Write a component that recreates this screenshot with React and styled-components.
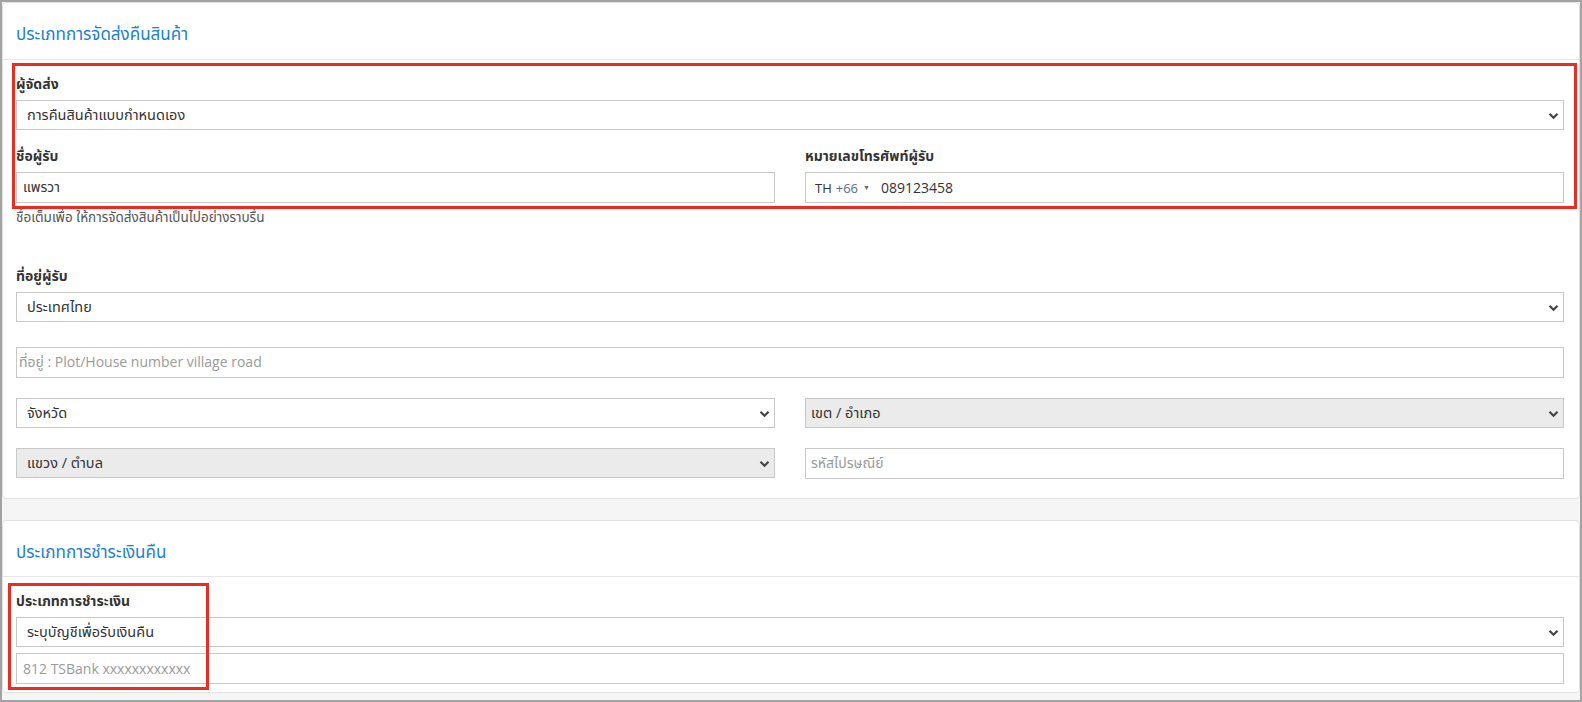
import React from 'react'
import styled, { createGlobalStyle } from 'styled-components'

const GlobalStyle = createGlobalStyle`
    body {
        margin: 0;
        font-family: 'Open Sans', 'Noto Sans Thai', 'Noto Sans', sans-serif;
        color: #333;
    }
`

const Frame = styled.div`
    position: relative;
    width: 1582px;
    height: 702px;
    box-sizing: border-box;
    border: 2px solid #a3a3a3;
    background: #f5f5f5;
    display: flex;
    flex-direction: column;
    gap: 21px;
    overflow: hidden;
`

const Card = styled.div`
    background: #fff;
    border: 1px solid #e1e1e1;
    border-radius: 4px;
`

const CardHeader = styled.div`
    height: ${p => p.height || 56}px;
    box-sizing: border-box;
    border-bottom: 1px solid #e6e6e6;
    padding: 8px 13px 0;
    display: flex;
    align-items: center;
`

const Title = styled.h3`
    margin: 0;
    font-size: 17px;
    font-weight: 400;
    color: #1a7fd2;
`

const CardBody = styled.div`
    padding: ${p => p.top || 15}px 15px ${p => p.bottom || 19}px 13px;
    display: flex;
    flex-direction: column;
`

const Label = styled.div`
    font-size: 14px;
    font-weight: 700;
    line-height: 18px;
    margin-top: ${p => p.gap || 0}px;
    margin-bottom: 7px;
    color: #333;
`

const Row = styled.div`
    display: grid;
    grid-template-columns: 1fr 1fr;
    column-gap: 30px;
    margin-top: ${p => p.gap || 0}px;
`

const Field = styled.div`
    display: flex;
    flex-direction: column;
`

const SelectBox = styled.div`
    height: 30px;
    box-sizing: border-box;
    border: 1px solid #c8c8c8;
    background: ${p => (p.disabled ? '#ebebeb' : '#fff')};
    padding: 1px 4px 0 ${p => p.pad || 10}px;
    margin-top: ${p => p.gap || 0}px;
    display: flex;
    align-items: center;
    justify-content: space-between;
    font-size: 14.5px;
    color: #333;
`

const InputBox = styled.div`
    height: 31px;
    box-sizing: border-box;
    border: 1px solid #c8c8c8;
    background: #fff;
    padding: 0 ${p => p.pad || 6}px;
    margin-top: ${p => p.gap || 0}px;
    display: flex;
    align-items: center;
    font-size: 14px;
    color: ${p => (p.placeholder ? '#9a9a9a' : '#333')};
`

const PhoneCode = styled.span`
    display: flex;
    align-items: center;
    gap: 4px;
    font-size: 13px;
    color: #333;
    margin-right: 11px;
`

const Dial = styled.span`
    color: #5b6a8c;
`

const Caret = styled.span`
    font-size: 7px;
    color: #666;
    margin-left: 1px;
`

const PhoneNumber = styled.span`
    font-size: 14px;
    color: #333;
`

const Help = styled.div`
    font-size: 13.5px;
    line-height: 18px;
    color: #555;
    margin-top: 5px;
`

const Highlight = styled.div`
    position: absolute;
    left: ${p => p.x}px;
    top: ${p => p.y}px;
    width: ${p => p.w}px;
    height: ${p => p.h}px;
    box-sizing: border-box;
    border: 3px solid #ee2b21;
    pointer-events: none;
`

const Chevron = () => (
    <svg width="11" height="8" viewBox="0 0 11 8">
        <path d="M1.5 1.8 L5.5 5.8 L9.5 1.8" fill="none" stroke="#444" strokeWidth="2.2" />
    </svg>
)

const Select = ({ children, ...rest }) => (
    <SelectBox {...rest}>
        <span>{children}</span>
        <Chevron />
    </SelectBox>
)

export default function App() {
    return (
        <Frame>
            <GlobalStyle />
            <Card>
                <CardHeader height={57}>
                    <Title>{'ประเภทการจัดส่งคืนสินค้า'}</Title>
                </CardHeader>
                <CardBody>
                    <Label>{'ผู้จัดส่ง'}</Label>
                    <Select>{'การคืนสินค้าแบบกำหนดเอง'}</Select>
                    <Row gap={17}>
                        <Field>
                            <Label>{'ชื่อผู้รับ'}</Label>
                            <InputBox>{'แพรวา'}</InputBox>
                        </Field>
                        <Field>
                            <Label>{'หมายเลขโทรศัพท์ผู้รับ'}</Label>
                            <InputBox pad={9}>
                                <PhoneCode>
                                    {'TH'}
                                    <Dial>{'+66'}</Dial>
                                    <Caret>{'▼'}</Caret>
                                </PhoneCode>
                                <PhoneNumber>{'089123458'}</PhoneNumber>
                            </InputBox>
                        </Field>
                    </Row>
                    <Help>{'ชื่อเต็มเพื่อ ให้การจัดส่งสินค้าเป็นไปอย่างราบรื่น'}</Help>
                    <Label gap={41}>{'ที่อยู่ผู้รับ'}</Label>
                    <Select>{'ประเทศไทย'}</Select>
                    <InputBox placeholder gap={25} pad={2}>
                        {'ที่อยู่ : Plot/House number village road'}
                    </InputBox>
                    <Row gap={20}>
                        <Select>{'จังหวัด'}</Select>
                        <Select disabled pad={5}>{'เขต / อำเภอ'}</Select>
                    </Row>
                    <Row gap={20}>
                        <Select disabled>{'แขวง / ตำบล'}</Select>
                        <InputBox placeholder pad={5}>{'รหัสไปรษณีย์'}</InputBox>
                    </Row>
                </CardBody>
            </Card>
            <Card>
                <CardHeader height={56}>
                    <Title>{'ประเภทการชำระเงินคืน'}</Title>
                </CardHeader>
                <CardBody top={15} bottom={8}>
                    <Label>{'ประเภทการชำระเงิน'}</Label>
                    <Select>{'ระบุบัญชีเพื่อรับเงินคืน'}</Select>
                    <InputBox placeholder gap={6}>{'812 TSBank xxxxxxxxxxxx'}</InputBox>
                </CardBody>
            </Card>
            <Highlight x={10} y={61} w={1565} h={146} />
            <Highlight x={6} y={581} w={201} h={107} />
        </Frame>
    )
}
